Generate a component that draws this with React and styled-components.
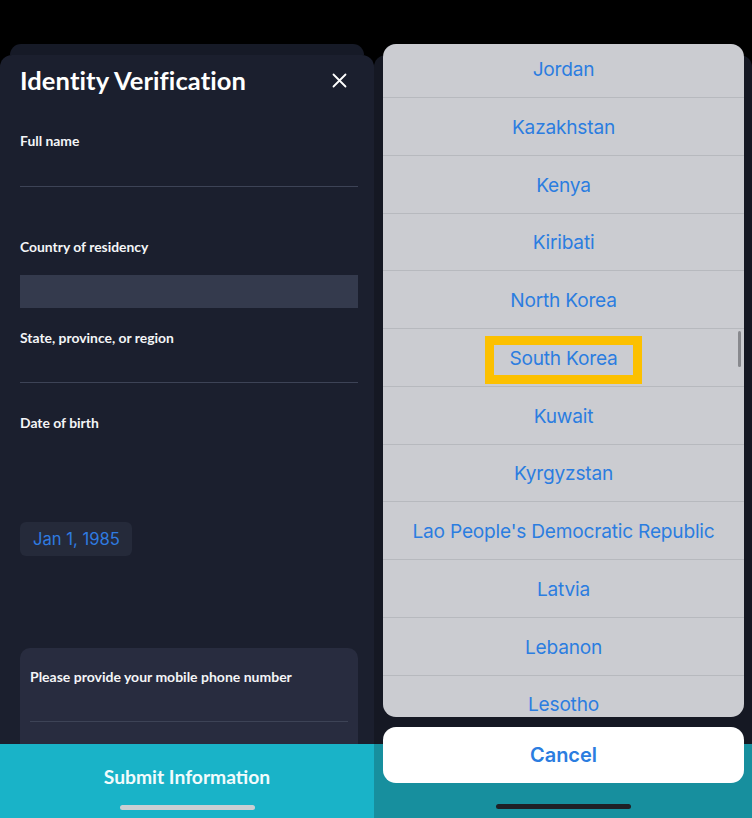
import React from 'react'
import styled, { createGlobalStyle } from 'styled-components'

const GlobalStyle = createGlobalStyle`
  html, body {
    margin: 0;
    padding: 0;
    background: #000;
  }
  * {
    box-sizing: border-box;
  }
`

const appFont = `'Lato', 'Open Sans', sans-serif`
const iosFont = `'Inter', 'Roboto', sans-serif`

const Shot = styled.div`
  display: flex;
  width: 752px;
  height: 818px;
  overflow: hidden;
  background: #000;
`

/* ---------- left phone: the form ---------- */

const Phone = styled.div`
  position: relative;
  display: flex;
  flex-direction: column;
  width: ${p => p.width}px;
  height: 818px;
  padding-top: 44px;
  background: #000;
`

const BackCard = styled.div`
  height: 11px;
  margin: 0 10px;
  background: ${p => (p.dim ? '#10131c' : '#161a27')};
  border-radius: 12px 12px 0 0;
`

const Sheet = styled.div`
  flex: 1;
  display: flex;
  flex-direction: column;
  min-height: 0;
  background: ${p => (p.dim ? '#151823' : '#1b1f2e')};
  border-radius: 12px 12px 0 0;
  overflow: hidden;
`

const Scroll = styled.div`
  flex: 1;
  min-height: 0;
  overflow: hidden;
  padding: 0 16px 0 20px;
`

const Header = styled.div`
  display: flex;
  align-items: center;
  justify-content: space-between;
  height: 50px;
`

const Title = styled.h1`
  margin: 0;
  font-family: ${appFont};
  font-size: 25.5px;
  font-weight: 700;
  line-height: 32px;
  color: #fff;
  letter-spacing: 0.1px;
`

const CloseButton = styled.button`
  display: flex;
  align-items: center;
  justify-content: center;
  width: 30px;
  height: 30px;
  margin-right: 4px;
  padding: 0;
  border: 0;
  background: transparent;
`

const Label = styled.div`
  margin-top: ${p => p.top}px;
  font-family: ${appFont};
  font-size: 13.9px;
  font-weight: 700;
  line-height: 18px;
  color: #f4f5f7;
`

const InputLine = styled.div`
  height: ${p => p.h}px;
  border-bottom: 1px solid #3d4356;
`

const SelectBox = styled.div`
  height: 33px;
  margin-top: 19px;
  background: #343a4d;
`

const DateChip = styled.div`
  display: inline-flex;
  align-items: center;
  height: 34px;
  margin-top: 90px;
  padding: 0 12px 0 13px;
  border-radius: 6px;
  background: #252a3a;
  font-family: ${iosFont};
  font-size: 16.6px;
  color: #2f7be0;
`

const PhoneCard = styled.div`
  height: 140px;
  margin-top: 92px;
  padding: 20px 10px 0;
  border-radius: 10px;
  background: #282c3f;
`

const CardLabel = styled(Label)`
  margin-top: 0;
  font-size: 14px;
`

const Footer = styled.div`
  display: flex;
  flex-direction: column;
  align-items: center;
  height: 74px;
  padding-top: 22px;
  background: ${p => (p.dim ? '#178f9e' : '#19b3c8')};
`

const SubmitText = styled.div`
  font-family: ${appFont};
  font-size: 19.3px;
  font-weight: 700;
  line-height: 22px;
  color: #f2fbfc;
`

const HomeBar = styled.div`
  flex: none;
  width: 135px;
  height: 5px;
  margin-top: ${p => p.top}px;
  border-radius: 3px;
  background: ${p => p.color};
`

/* ---------- right phone: the country picker ---------- */

const Backdrop = styled.div`
  flex: 1;
  display: flex;
  flex-direction: column;
`

const Overlay = styled.div`
  position: absolute;
  inset: 0;
  display: flex;
  flex-direction: column;
  align-items: center;
  padding: 44px 8px 0 9px;
`

const ActionSheet = styled.div`
  position: relative;
  flex: none;
  width: 100%;
  height: 673px;
  border-radius: 13px;
  background: #cbccd1;
  overflow: hidden;
`

const List = styled.div`
  margin-top: -3.75px;
`

const Row = styled.div`
  display: flex;
  align-items: center;
  justify-content: center;
  height: 57.75px;
  padding-top: 1px;
  border-bottom: 1px solid #b7b9be;
`

const RowText = styled.span`
  position: relative;
  font-family: ${iosFont};
  font-size: 19.1px;
  line-height: 24px;
  color: #2b7de0;
  letter-spacing: -0.2px;
`

const Highlight = styled.span`
  position: absolute;
  top: -10px;
  bottom: -14px;
  left: -24px;
  right: -24px;
  border: 9px solid #fcc000;
`

const ScrollThumb = styled.div`
  position: absolute;
  top: 287px;
  right: 3px;
  width: 3px;
  height: 36px;
  border-radius: 2px;
  background: #88898e;
`

const CancelButton = styled.button`
  flex: none;
  display: flex;
  align-items: center;
  justify-content: center;
  width: 100%;
  height: 56px;
  margin-top: 10px;
  padding: 0;
  border: 0;
  border-radius: 13px;
  background: #fff;
  font-family: ${iosFont};
  font-size: 20px;
  font-weight: 600;
  line-height: 24px;
  color: #2b7de0;
`

const countries = [
  'Jordan',
  'Kazakhstan',
  'Kenya',
  'Kiribati',
  'North Korea',
  'South Korea',
  'Kuwait',
  'Kyrgyzstan',
  "Lao People's Democratic Republic",
  'Latvia',
  'Lebanon',
  'Lesotho'
]

const CloseIcon = () => (
  <svg width="15" height="15" viewBox="0 0 15 15">
    <path d="M1.5 1.5 L13.5 13.5 M13.5 1.5 L1.5 13.5" stroke="#fff" strokeWidth="1.8" strokeLinecap="round" />
  </svg>
)

const FormScreen = () => (
  <Phone width={374}>
    <BackCard />
    <Sheet>
      <Scroll>
        <Header>
          <Title>Identity Verification</Title>
          <CloseButton aria-label="Close">
            <CloseIcon />
          </CloseButton>
        </Header>

        <Label top={27}>Full name</Label>
        <InputLine h={37} />

        <Label top={51}>Country of residency</Label>
        <SelectBox />

        <Label top={21}>State, province, or region</Label>
        <InputLine h={36} />

        <Label top={31}>Date of birth</Label>
        <DateChip>Jan 1, 1985</DateChip>

        <PhoneCard>
          <CardLabel>Please provide your mobile phone number</CardLabel>
          <InputLine h={36} />
        </PhoneCard>
      </Scroll>
      <Footer>
        <SubmitText>Submit Information</SubmitText>
        <HomeBar top={17} color="#c9cfd3" />
      </Footer>
    </Sheet>
  </Phone>
)

const PickerScreen = () => (
  <Phone width={378}>
    <Backdrop>
      <BackCard dim />
      <Sheet dim>
        <Scroll />
        <Footer dim />
      </Sheet>
    </Backdrop>
    <Overlay>
      <ActionSheet>
        <List>
          {countries.map(name => (
            <Row key={name}>
              <RowText>
                {name}
                {name === 'South Korea' && <Highlight />}
              </RowText>
            </Row>
          ))}
        </List>
        <ScrollThumb />
      </ActionSheet>
      <CancelButton>Cancel</CancelButton>
      <HomeBar top={21} color="#1f2026" />
    </Overlay>
  </Phone>
)

const App = () => (
  <>
    <GlobalStyle />
    <Shot>
      <FormScreen />
      <PickerScreen />
    </Shot>
  </>
)

export default App
